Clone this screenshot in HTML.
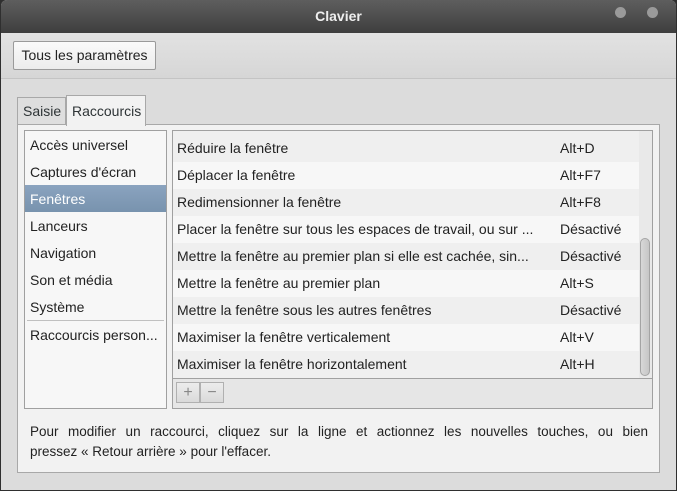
<!DOCTYPE html>
<html><head><meta charset="utf-8"><style>
*{margin:0;padding:0;box-sizing:border-box}
body{width:677px;height:491px;background:#2f2f2f;font-family:"Liberation Sans",sans-serif;font-size:14px;color:#2e3436;overflow:hidden;position:relative}
.win{position:absolute;left:1px;top:0;width:675px;height:490px;background:#dcdcdc;border-radius:6px 6px 0 0;overflow:hidden}
.title{position:absolute;left:0;top:0;width:675px;height:33px;background:linear-gradient(#5e5e5e,#3e3e3e);color:#eee;text-align:center;line-height:33px;font-size:14px;font-weight:bold}
.dot{position:absolute;top:7px;width:11px;height:11px;border-radius:50%;background:#9a9a9a}
.hdr{position:absolute;left:0;top:33px;width:675px;height:46px;background:linear-gradient(#e2e2e2,#d6d6d6);border-bottom:1px solid #c4c4c4}
.btn{position:absolute;left:12px;top:41px;width:143px;height:29px;border:1px solid #9a9a9a;border-radius:2px;background:linear-gradient(#fafafa,#ececec);line-height:27px;text-align:center;color:#222}
.tab{position:absolute;border:1px solid #a8a8a8;border-bottom:none;line-height:26px;padding-left:5px}
.panel{position:absolute;left:16px;top:124px;width:643px;height:349px;background:#f2f2f2;border:1px solid #a8a8a8}
.left{position:absolute;left:23px;top:130px;width:143px;height:279px;background:#f7f7f7;border:1px solid #a0a0a0}
.left div{height:27px;line-height:28px;padding-left:5px;color:#222}
.left .sel{background:linear-gradient(#8aa3bf,#7893ae);color:#fff}
.right{position:absolute;left:171px;top:130px;width:481px;height:279px;border:1px solid #a0a0a0;background:#f7f7f7}
.row{position:absolute;left:0;width:466px;height:27px;line-height:27px;padding-left:4px;color:#222}
.row span{position:absolute;left:387px}
.tb{position:absolute;left:0;top:247px;width:479px;height:30px;background:#e6e6e6;border-top:1px solid #a0a0a0}
.sb{position:absolute;left:466px;top:0;width:13px;height:247px;background:#e9e9e9}
.thumb{position:absolute;left:1px;top:107px;width:10px;height:138px;border:1px solid #a4a4a4;border-radius:5px;background:linear-gradient(90deg,#d8d8d8,#c6c6c6)}
.tbtn{position:absolute;top:3px;width:24px;height:21px;border:1px solid #b0b0b0;background:linear-gradient(#ececec,#dadada);text-align:center;line-height:19px;color:#888;font-size:16px}
.help{position:absolute;left:29px;top:422px;width:618px;line-height:20px;color:#222;font-size:13.5px}
.help .j{text-align:justify;text-align-last:justify;display:block}
</style></head><body>
<div class="win">
<div class="title">Clavier<div class="dot" style="left:614px"></div><div class="dot" style="left:646px"></div></div>
<div class="hdr"></div>
<div class="btn">Tous les paramètres</div>
<div class="panel"></div>
<div class="tab" style="left:16px;top:97px;width:49px;height:27px;background:#dedede">Saisie</div>
<div class="tab" style="left:65px;top:95px;width:80px;height:31px;background:#f2f2f2;line-height:30px">Raccourcis</div>
<div class="left">
<div>Accès universel</div><div>Captures d'écran</div><div class="sel">Fenêtres</div><div>Lanceurs</div><div>Navigation</div><div>Son et média</div><div>Système</div>
<div style="border-top:1px solid #c0c0c0;margin:0 2px;padding-left:3px">Raccourcis person...</div>
</div>
<div class="right">
<div class="row" style="top:0;height:31px;line-height:34px;background:#efefef">Réduire la fenêtre<span>Alt+D</span></div>
<div class="row" style="top:31px;background:#f7f7f7">Déplacer la fenêtre<span>Alt+F7</span></div>
<div class="row" style="top:58px;background:#efefef">Redimensionner la fenêtre<span>Alt+F8</span></div>
<div class="row" style="top:85px;background:#f7f7f7">Placer la fenêtre sur tous les espaces de travail, ou sur ...<span>Désactivé</span></div>
<div class="row" style="top:112px;background:#efefef">Mettre la fenêtre au premier plan si elle est cachée, sin...<span>Désactivé</span></div>
<div class="row" style="top:139px;background:#f7f7f7">Mettre la fenêtre au premier plan<span>Alt+S</span></div>
<div class="row" style="top:166px;background:#efefef">Mettre la fenêtre sous les autres fenêtres<span>Désactivé</span></div>
<div class="row" style="top:193px;background:#f7f7f7">Maximiser la fenêtre verticalement<span>Alt+V</span></div>
<div class="row" style="top:220px;background:#efefef">Maximiser la fenêtre horizontalement<span>Alt+H</span></div>
<div class="sb"><div class="thumb"></div></div>
<div class="tb"><div class="tbtn" style="left:3px">+</div><div class="tbtn" style="left:27px">−</div></div>
</div>
<div class="help"><span class="j">Pour modifier un raccourci, cliquez sur la ligne et actionnez les nouvelles touches, ou bien</span>pressez « Retour arrière » pour l'effacer.</div>
</div>
</body></html>
